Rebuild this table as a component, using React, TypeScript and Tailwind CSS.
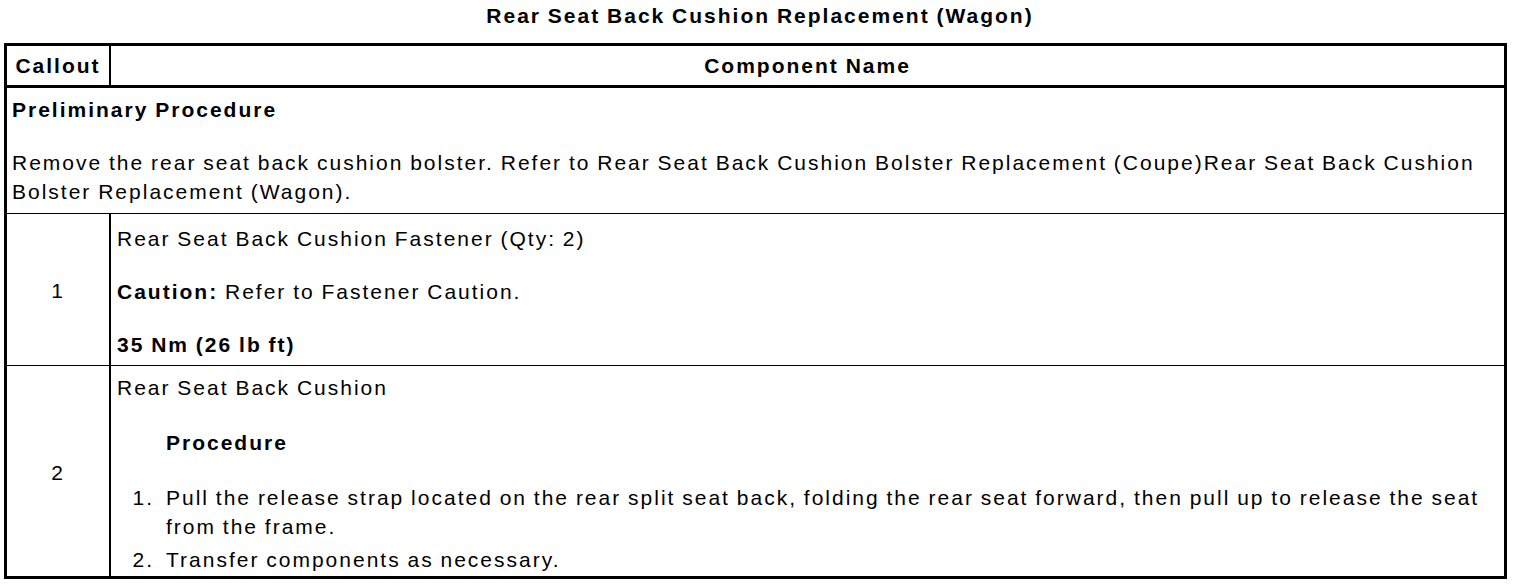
import React from 'react';

const steps = [
  'Pull the release strap located on the rear split seat back, folding the rear seat forward, then pull up to release the seat from the frame.',
  'Transfer components as necessary.',
];

const App: React.FC = () => {
  return (
    <div className="w-[1520px] h-[588px] bg-white text-black text-[21px] leading-[29px] tracking-[2px] [word-spacing:-1px] font-['Liberation_Sans',Arial,sans-serif]">
      <div className="h-[43px] pt-[1px] text-center font-bold">
        Rear Seat Back Cushion Replacement (Wagon)
      </div>

      <div className="ml-[4px] w-[1503px] border-[3px] border-black">
        {/* header */}
        <div className="flex h-[42px] border-b-[3px] border-black font-bold">
          <div className="w-[104px] border-r-2 border-black flex items-center justify-center">Callout</div>
          <div className="flex-1 flex items-center justify-center">Component Name</div>
        </div>

        {/* preliminary */}
        <div className="border-b border-black px-[5px] pt-[7px] pb-[7px]">
          <p className="font-bold">Preliminary Procedure</p>
          <p className="mt-[24px]">
            Remove the rear seat back cushion bolster. Refer to Rear Seat Back Cushion Bolster Replacement (Coupe)Rear Seat Back Cushion Bolster Replacement (Wagon).
          </p>
        </div>

        {/* row 1 */}
        <div className="flex border-b border-black">
          <div className="w-[104px] shrink-0 border-r-2 border-black flex items-center justify-center pt-[2px]">1</div>
          <div className="flex-1 px-[6px] pt-[10px] pb-[6px]">
            <p>Rear Seat Back Cushion Fastener (Qty: 2)</p>
            <p className="mt-[24px]">
              <span className="font-bold">Caution:</span> Refer to Fastener Caution.
            </p>
            <p className="mt-[24px] font-bold">35 Nm (26 lb ft)</p>
          </div>
        </div>

        {/* row 2 */}
        <div className="flex">
          <div className="w-[104px] shrink-0 border-r-2 border-black flex items-center justify-center pt-[2px]">2</div>
          <div className="flex-1 pl-[6px] pr-[2px] pt-[7px] pb-[2px]">
            <p>Rear Seat Back Cushion</p>
            <p className="mt-[26px] pl-[49px] font-bold">Procedure</p>
            <ol className="mt-[26px]">
              {steps.map((s, i) => (
                <li key={i} className={`flex ${i > 0 ? 'mt-[4px]' : ''}`}>
                  <span className="w-[49px] shrink-0 pr-[12px] text-right">{i + 1}.</span>
                  <span className="flex-1">{s}</span>
                </li>
              ))}
            </ol>
          </div>
        </div>
      </div>
    </div>
  );
};

export default App;
